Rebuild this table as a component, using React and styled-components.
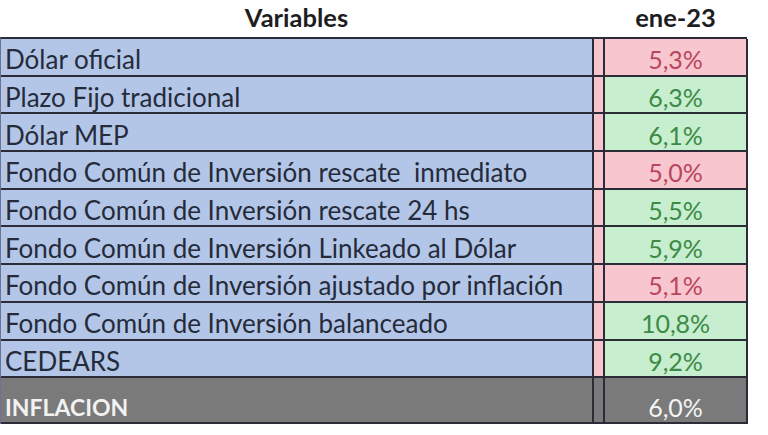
import React from "react";
import styled, { createGlobalStyle } from "styled-components";

const GlobalStyle = createGlobalStyle`
  html, body {
    margin: 0;
    padding: 0;
    background: #ffffff;
  }
  body {
    font-family: Lato, "Open Sans", sans-serif;
  }
`;

const Page = styled.div`
  width: 768px;
  height: 435px;
  background: #fff;
  overflow: hidden;
`;

const Grid = styled.div`
  display: grid;
  grid-template-columns: 593px 11px 143px;
  width: 747px;
`;

const HeadCell = styled.div`
  height: 37px;
  display: flex;
  align-items: center;
  justify-content: center;
  font-weight: 700;
  font-size: 25.5px;
  color: #1d1d22;
  padding-bottom: 3px;
  box-sizing: border-box;
`;

const Body = styled.div`
  grid-column: 1 / 4;
  display: grid;
  grid-template-columns: 593px 11px 143px;
  border-top: 2px solid #2b2c38;
  border-left: 1px solid #6c7390;
`;

const Cell = styled.div`
  height: ${(p) => (p.$total ? 46 : 37.7)}px;
  box-sizing: border-box;
  border-bottom: 2px solid #2b2c38;
  display: flex;
  align-items: ${(p) => (p.$total ? "flex-end" : "center")};
  padding-top: ${(p) => (p.$total ? 0 : 5)}px;
`;

const Label = styled(Cell)`
  font-size: ${(p) => (p.$total ? 23 : 26)}px;
  font-weight: ${(p) => (p.$total ? 700 : 400)};
  white-space: pre;
  background: ${(p) => (p.$total ? "#7a7a7a" : "#b3c6e7")};
  color: ${(p) => (p.$total ? "#f2f2f2" : "#252b3a")};
  padding-left: 4px;
  padding-bottom: ${(p) => (p.$total ? 1 : 0)}px;
  border-right: 2px solid #2b2c38;
`;

const Gap = styled(Cell)`
  background: ${(p) => (p.$total ? "#7a7a7a" : "#f6c5ce")};
  border-right: 2px solid #2b2c38;
`;

const Value = styled(Cell)`
  font-size: 25px;
  justify-content: center;
  border-right: 2px solid #2b2c38;
  background: ${(p) =>
    p.$total ? "#7a7a7a" : p.$tone === "bad" ? "#f8c6cf" : "#c7eecf"};
  color: ${(p) =>
    p.$total ? "#f4f4f4" : p.$tone === "bad" ? "#b8475d" : "#3c8a45"};
  padding-bottom: 0;
`;

const rows = [
  ["Dólar oficial", "5,3%", "bad"],
  ["Plazo Fijo tradicional", "6,3%", "good"],
  ["Dólar MEP", "6,1%", "good"],
  ["Fondo Común de Inversión rescate  inmediato", "5,0%", "bad"],
  ["Fondo Común de Inversión rescate 24 hs", "5,5%", "good"],
  ["Fondo Común de Inversión Linkeado al Dólar", "5,9%", "good"],
  ["Fondo Común de Inversión ajustado por inflación", "5,1%", "bad"],
  ["Fondo Común de Inversión balanceado", "10,8%", "good"],
  ["CEDEARS", "9,2%", "good"],
];

export default function App() {
  return (
    <Page>
      <GlobalStyle />
      <Grid>
        <HeadCell>Variables</HeadCell>
        <HeadCell />
        <HeadCell>ene-23</HeadCell>
        <Body>
          {rows.map(([label, value, tone]) => (
            <React.Fragment key={label}>
              <Label>{label}</Label>
              <Gap />
              <Value $tone={tone}>{value}</Value>
            </React.Fragment>
          ))}
          <Label $total>INFLACION</Label>
          <Gap $total />
          <Value $total>6,0%</Value>
        </Body>
      </Grid>
    </Page>
  );
}
